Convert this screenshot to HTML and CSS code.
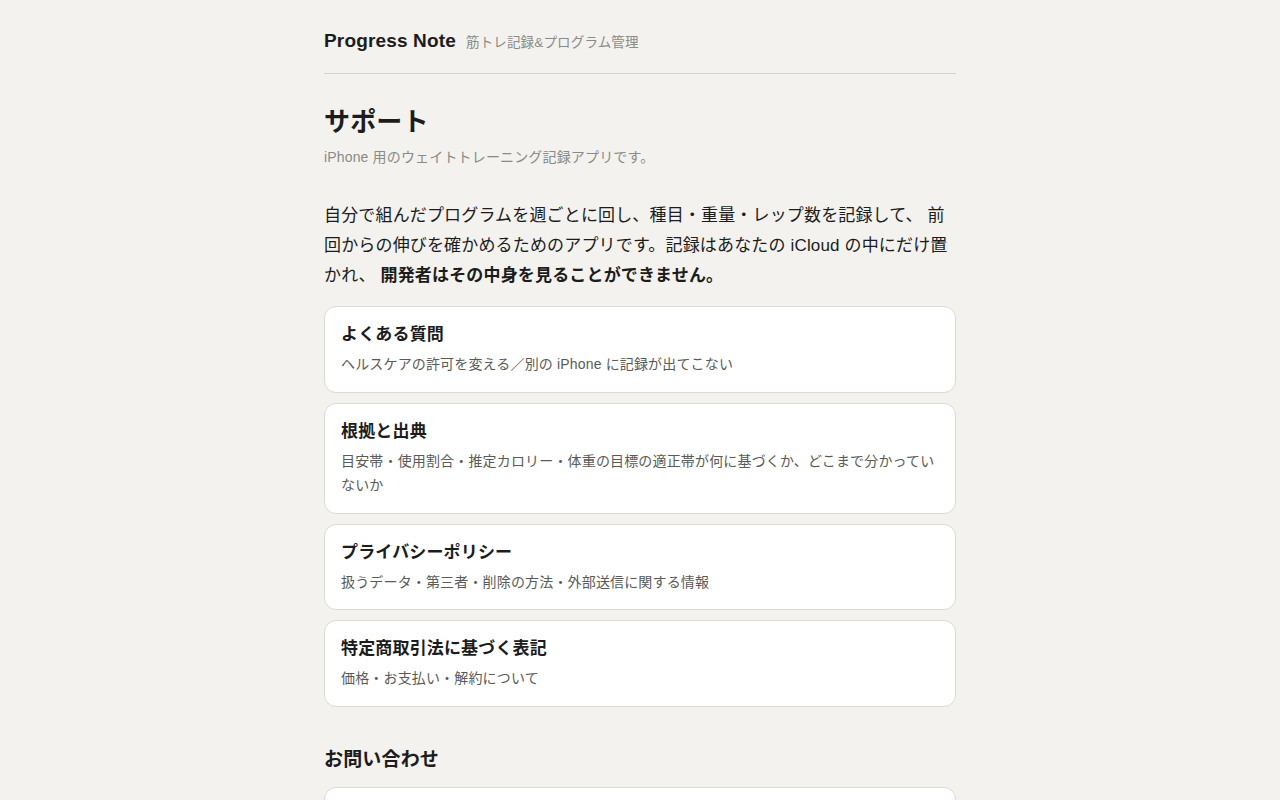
FILE: index.html
```html
<!DOCTYPE html>
<html lang="ja">

<head>
    <meta charset="UTF-8">
    <meta name="viewport" content="width=device-width, initial-scale=1.0">
    <title>サポート | Progress Note</title>
    <link rel="stylesheet" href="styles.css">
</head>

<body>
    <div class="wrap">
        <header class="site-header">
            <a class="brand" href="#">Progress Note</a>
            <span class="tagline">筋トレ記録&amp;プログラム管理</span>
        </header>

        <main>
            <h1 class="page-title">サポート</h1>
            <p class="lead">iPhone 用のウェイトトレーニング記録アプリです。</p>

            <p class="intro">自分で組んだプログラムを週ごとに回し、種目・重量・レップ数を記録して、 前回からの伸びを確かめるためのアプリです。記録はあなたの iCloud の中にだけ置かれ、 <strong>開発者はその中身を見ることができません。</strong></p>

            <ul class="cards">
                <li class="card">
                    <a href="#">
                        <div class="card-title">よくある質問</div>
                        <div class="card-desc">ヘルスケアの許可を変える／別の iPhone に記録が出てこない</div>
                    </a>
                </li>
                <li class="card">
                    <a href="#">
                        <div class="card-title">根拠と出典</div>
                        <div class="card-desc">目安帯・使用割合・推定カロリー・体重の目標の適正帯が何に基づくか、どこまで分かっていないか</div>
                    </a>
                </li>
                <li class="card">
                    <a href="#">
                        <div class="card-title">プライバシーポリシー</div>
                        <div class="card-desc">扱うデータ・第三者・削除の方法・外部送信に関する情報</div>
                    </a>
                </li>
                <li class="card">
                    <a href="#">
                        <div class="card-title">特定商取引法に基づく表記</div>
                        <div class="card-desc">価格・お支払い・解約について</div>
                    </a>
                </li>
            </ul>

            <h2 class="section-title">お問い合わせ</h2>
            <div class="card contact">
                <div class="card-title">メールでのお問い合わせ</div>
                <div class="card-desc">support@progressnote.app</div>
            </div>
        </main>
    </div>
</body>

</html>
```

FILE: styles.css
```css
* {
    padding: 0;
    margin: 0;
    box-sizing: border-box;
}

body {
    background-color: #f3f2ee;
    color: #1c1c1c;
    font-family: "Liberation Sans", "Noto Sans CJK JP", sans-serif;
    letter-spacing: 0.01em;
}

a {
    color: inherit;
    text-decoration: none;
}

ul {
    list-style: none;
}

.wrap {
    width: 632px;
    margin: 0 auto;
}

.site-header {
    display: flex;
    align-items: baseline;
    gap: 10px;
    padding: 27px 0 18px;
    border-bottom: 1px solid #d5d3ce;
}

.brand {
    font-size: 19px;
    font-weight: bold;
    line-height: 28px;
}

.tagline {
    font-size: 13.5px;
    color: #8a8a87;
}

.page-title {
    margin: 30px 0 6px;
    font-size: 26px;
    line-height: 36px;
    font-weight: bold;
}

.lead {
    font-size: 14px;
    line-height: 22px;
    color: #8a8a87;
}

.intro {
    margin: 33px 0 15px;
    font-size: 17px;
    line-height: 30px;
}

.intro strong {
    font-weight: bold;
}

.card {
    display: block;
    margin-bottom: 10px;
    padding: 16px 16px 15px;
    background-color: #fff;
    border: 1px solid #dcdad5;
    border-radius: 12px;
}

.card-title {
    margin-bottom: 5px;
    font-size: 17px;
    line-height: 24px;
    font-weight: bold;
}

.card-desc {
    font-size: 14px;
    line-height: 24.5px;
    color: #5a5a58;
}

.section-title {
    margin: 38px 0 12px;
    font-size: 19px;
    line-height: 30px;
    font-weight: bold;
}
```
